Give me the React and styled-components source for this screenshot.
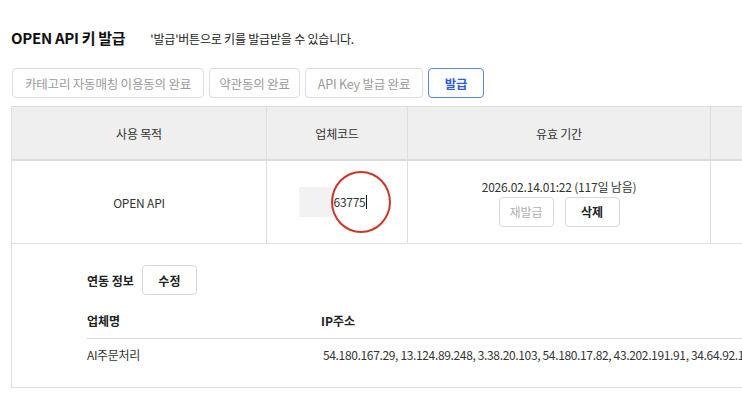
import React from 'react';
import styled, { createGlobalStyle } from 'styled-components';

const GlobalStyle = createGlobalStyle`
  html, body {
    margin: 0;
    padding: 0;
    background: #fff;
    overflow: hidden;
  }
  body {
    font-family: "Noto Sans CJK KR", "Noto Sans", sans-serif;
    color: #222;
  }
`;

const Page = styled.div`
  width: 742px;
  height: 398px;
  overflow: hidden;
  padding: 27px 0 0 11px;
  box-sizing: border-box;
`;

const TitleRow = styled.div`
  display: flex;
  align-items: baseline;
  gap: 25px;
  height: 22px;
`;

const Title = styled.h2`
  margin: 0;
  font-size: 15px;
  font-weight: 700;
  color: #111;
  letter-spacing: -0.3px;
`;

const Hint = styled.span`
  font-size: 12px;
  color: #222;
  letter-spacing: -0.2px;
`;

const StepRow = styled.div`
  display: flex;
  gap: 5px;
  margin: 19px 0 0 1px;
`;

const StepButton = styled.button`
  height: 30px;
  padding: 0;
  box-sizing: border-box;
  border-radius: 4px;
  background: #fff;
  font-family: inherit;
  font-size: 12.5px;
  letter-spacing: -0.2px;
  border: ${p => (p.$primary ? '1.5px solid #5b84ea' : '1px solid #dcdcdc')};
  color: ${p => (p.$primary ? '#2f5fd8' : '#9a9a9a')};
  font-weight: ${p => (p.$primary ? 700 : 400)};
  width: ${p => p.$w}px;
`;

const Table = styled.div`
  margin-top: 8px;
  width: 900px;
  border-top: 1px solid #dedede;
  border-left: 1px solid #dedede;
`;

const Row = styled.div`
  display: grid;
  grid-template-columns: 255px 141px 303px 200px;
  height: ${p => p.$h}px;
  background: ${p => (p.$head ? '#efefef' : '#fff')};
  border-bottom: ${p => (p.$head ? '2px solid #dcdcdc' : '1px solid #e2e2e2')};
`;

const Cell = styled.div`
  display: flex;
  flex-direction: column;
  align-items: center;
  justify-content: center;
  border-right: 1px solid #dedede;
  font-size: 12px;
  color: #333;
  letter-spacing: -0.2px;
  gap: 2px;
`;

const CodeWrap = styled.div`
  position: relative;
  display: flex;
  align-items: center;
  margin-left: -8px;
`;

const Mask = styled.span`
  display: block;
  width: 35px;
  height: 30px;
  background: #f2f2f2;
`;

const CodeText = styled.span`
  font-size: 12px;
  color: #333;
  letter-spacing: -0.3px;
  border-right: 1px solid #111;
  padding-right: 1px;
  line-height: 14px;
`;

const Circle = styled.span`
  position: absolute;
  left: 32px;
  top: -16px;
  width: 60px;
  height: 62px;
  border: 2.5px solid #c9362a;
  border-radius: 50%;
  box-sizing: border-box;
`;

const ActionRow = styled.div`
  display: flex;
  gap: 11px;
`;

const SmallButton = styled.button`
  height: 30px;
  width: ${p => p.$w || 55}px;
  box-sizing: border-box;
  border: 1px solid #d8d8d8;
  border-radius: 4px;
  background: #fff;
  font-family: inherit;
  font-size: 12px;
  color: ${p => (p.$disabled ? '#b0b0b0' : '#222')};
  font-weight: ${p => (p.$disabled ? 400 : 700)};
`;

const Detail = styled.div`
  width: 900px;
  height: 144px;
  box-sizing: border-box;
  border-left: 1px solid #dedede;
  border-bottom: 1px solid #dedede;
  padding: 21px 0 0 75px;
`;

const DetailHead = styled.div`
  display: flex;
  align-items: center;
  gap: 8px;
`;

const Label = styled.span`
  font-size: 12px;
  font-weight: 700;
  color: #222;
`;

const InfoGrid = styled.div`
  display: grid;
  grid-template-columns: 234px 1fr;
  margin-top: 8px;
`;

const InfoHead = styled.div`
  font-size: 12px;
  font-weight: 700;
  color: #222;
  height: 35px;
  display: flex;
  align-items: center;
  border-bottom: 1px solid #dadada;
`;

const InfoCell = styled.div`
  font-size: 12px;
  color: #333;
  height: 30px;
  display: flex;
  align-items: center;
  white-space: nowrap;
  letter-spacing: -0.35px;
  padding-left: ${p => p.$indent || 0}px;
`;

export default function App() {
  return (
    <>
      <GlobalStyle />
      <Page>
        <TitleRow>
          <Title>OPEN API 키 발급</Title>
          <Hint>'발급'버튼으로 키를 발급받을 수 있습니다.</Hint>
        </TitleRow>

        <StepRow>
          <StepButton $w={192}>카테고리 자동매칭 이용동의 완료</StepButton>
          <StepButton $w={91}>약관동의 완료</StepButton>
          <StepButton $w={118}>API Key 발급 완료</StepButton>
          <StepButton $w={56} $primary>발급</StepButton>
        </StepRow>

        <Table>
          <Row $head $h={52}>
            <Cell>사용 목적</Cell>
            <Cell>업체코드</Cell>
            <Cell>유효 기간</Cell>
            <Cell />
          </Row>
          <Row $h={82}>
            <Cell>OPEN API</Cell>
            <Cell>
              <CodeWrap>
                <Mask />
                <CodeText>63775</CodeText>
                <Circle />
              </CodeWrap>
            </Cell>
            <Cell>
              <span>2026.02.14.01:22 (117일 남음)</span>
              <ActionRow>
                <SmallButton $disabled>재발급</SmallButton>
                <SmallButton>삭제</SmallButton>
              </ActionRow>
            </Cell>
            <Cell />
          </Row>
        </Table>

        <Detail>
          <DetailHead>
            <Label>연동 정보</Label>
            <SmallButton>수정</SmallButton>
          </DetailHead>
          <InfoGrid>
            <InfoHead>업체명</InfoHead>
            <InfoHead>IP주소</InfoHead>
            <InfoCell>AI주문처리</InfoCell>
            <InfoCell $indent={2}>
              54.180.167.29, 13.124.89.248, 3.38.20.103, 54.180.17.82, 43.202.191.91, 34.64.92.135
            </InfoCell>
          </InfoGrid>
        </Detail>
      </Page>
    </>
  );
}
